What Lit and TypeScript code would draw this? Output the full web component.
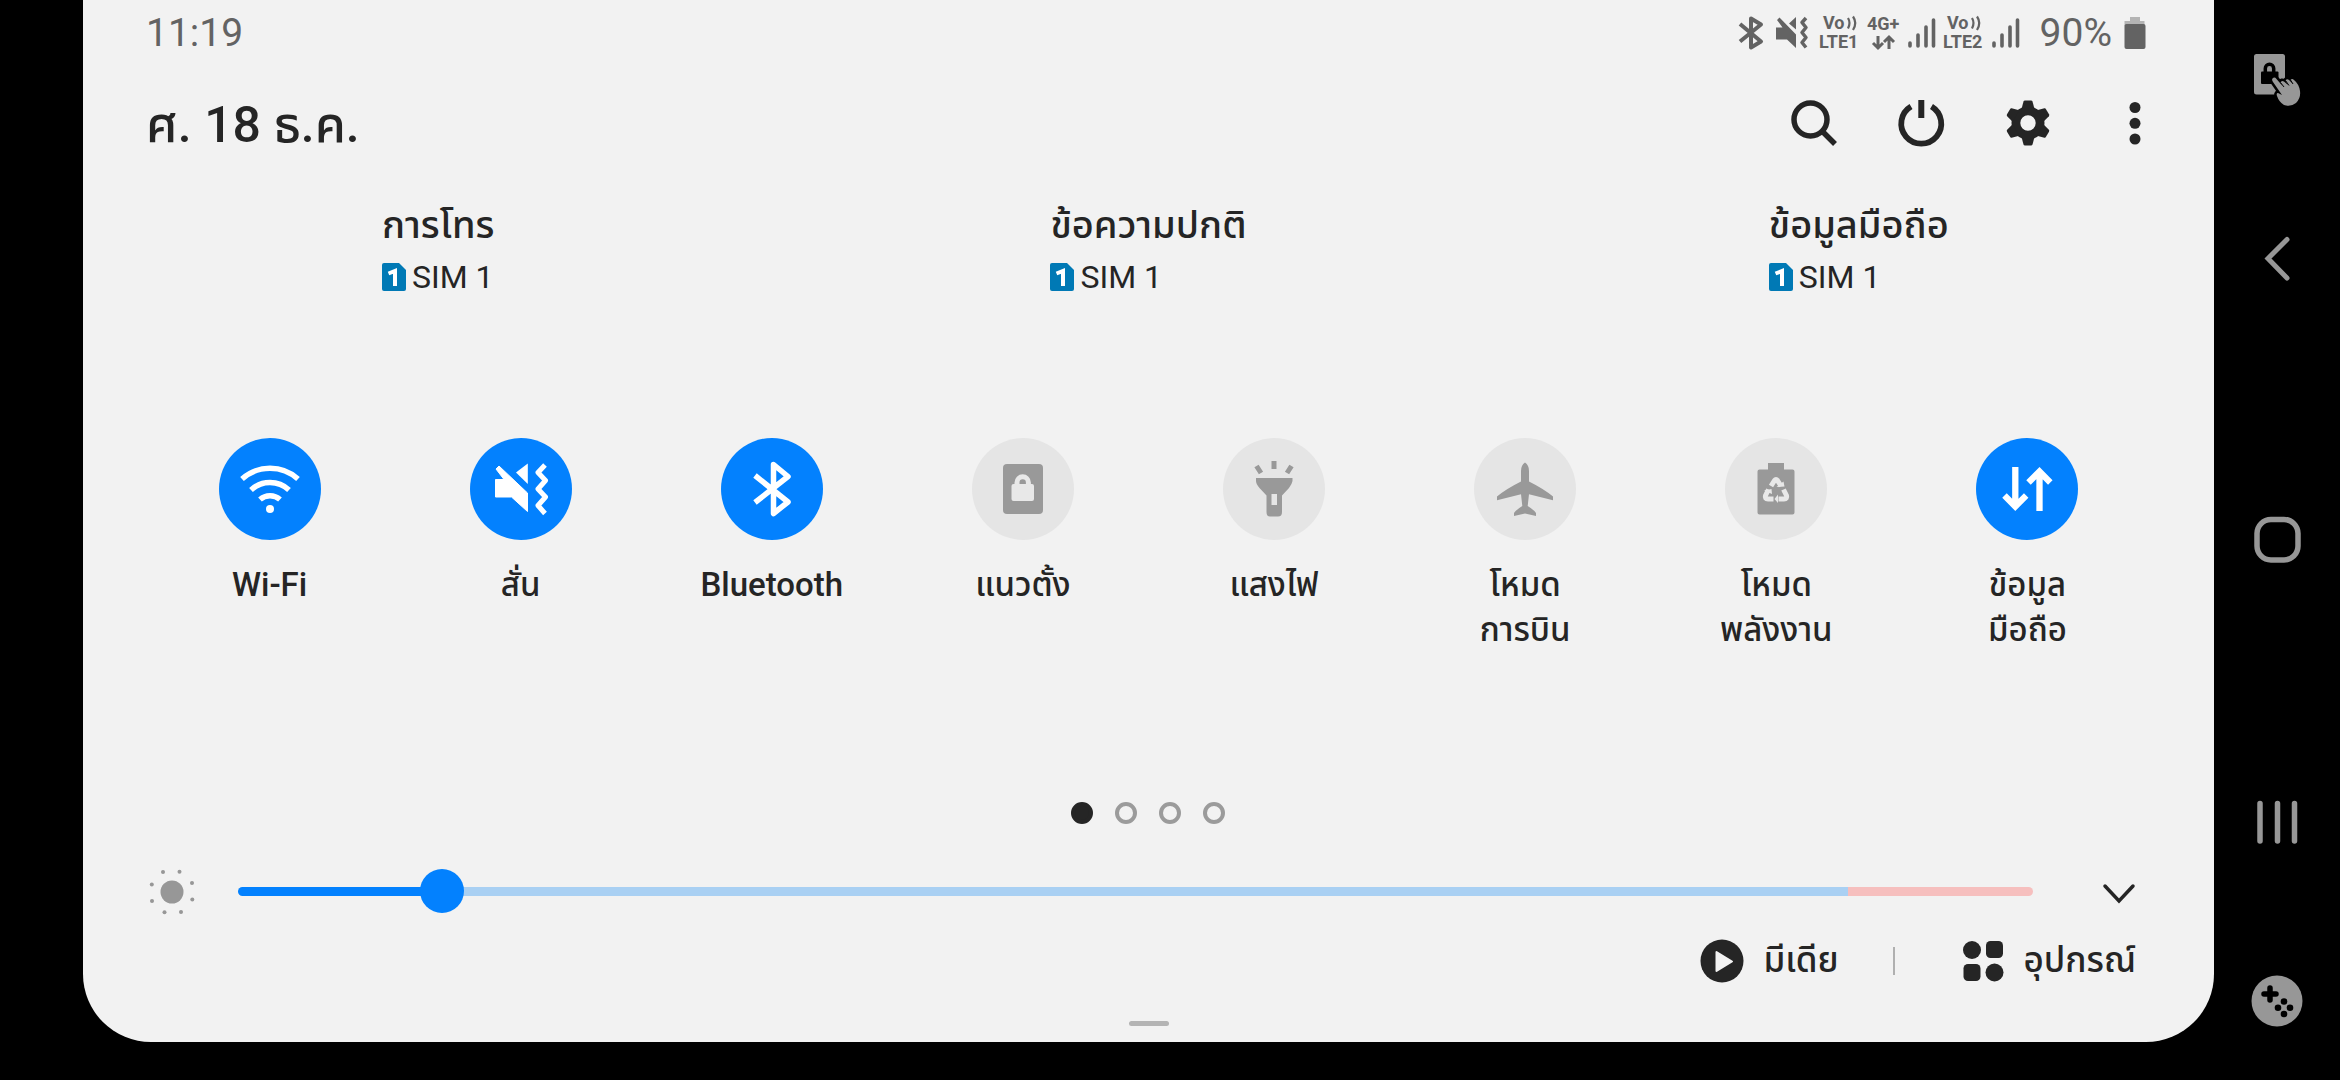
import { LitElement, html, svg, css, type TemplateResult } from "lit";
import { customElement, property, state } from "lit/decorators.js";
import { classMap } from "lit/directives/class-map.js";

const glyphs: Record<string, TemplateResult> = {
  wifi: svg`
    <g fill="none" stroke="currentColor" stroke-width="5.5">
      <path d="M23 41A42 42 0 0 1 79 41"/>
      <path d="M32 52A28 28 0 0 1 70 52"/>
      <path d="M41 61.5A15 15 0 0 1 61 61.5"/>
    </g>
    <circle cx="51" cy="71" r="4" fill="currentColor"/>`,
  vibrate: svg`
    <path fill="currentColor" stroke="currentColor" stroke-linejoin="round" d="M25.5 41.5H34L26 31L29 28L57.5 55V73.5L41.5 59H25.5Z"/>
    <path fill="currentColor" d="M46 34.500L57.800 25.600V46Z"/>
    <path fill="none" stroke="currentColor" stroke-width="5" stroke-linejoin="round" d="M75 27L68 34.500L75.500 42.500L68 51L75.500 59L68 67.500L75 75.500"/>`,
  bluetooth: svg`
    <path fill="none" stroke="currentColor" stroke-width="5.500" stroke-linejoin="round" d="M34 37.500L67 64L52.500 75.500V26.500L67 38.500L34 64.500"/>`,
  portrait: svg`
    <rect x="31" y="26" width="40" height="50" rx="4" fill="currentColor"/>
    <rect x="39.500" y="46" width="22.500" height="17" rx="2" fill="#e8e8e8"/>
    <path fill="none" stroke="#e8e8e8" stroke-width="5" d="M45 47V44.500A5.700 5.700 0 0 1 56.400 44.500V47"/>`,
  torch: svg`
    <g stroke="currentColor" stroke-width="5">
      <path d="M51 23V31M33.500 28L38 35M68.500 28L64 35"/>
    </g>
    <path fill="currentColor" fill-rule="evenodd" d="M33 40H69.500V43Q69 46 66 50L59 57.500V74Q59 78.500 55 78.500H47Q43.500 78.500 43.500 74V57.500L36.500 50Q33 46 33 43ZM48.500 56V67H54V56Z"/>`,
  plane: svg`
    <path fill="currentColor" d="M51 24.500Q55 27 55 33V43.500Q70 51 79 58.500V62.300L55 56.300L53.700 68Q60 72 62 75V78L51 75.500L40 78V75Q42 72 48.300 68L47 56.300L23 62.300V58.500Q32 51 47 43.500V33Q47 27 51 24.500Z"/>`,
  saver: svg`
    <path fill="currentColor" d="M43 25H59V31.500H67.500Q69.500 31.500 69.500 33.500V74.500Q69.500 76.500 67.500 76.500H34.500Q32.500 76.500 32.500 74.500V33.500Q32.500 31.500 34.500 31.500H43Z"/>
    <g fill="none" stroke="#e8e8e8" stroke-width="5" stroke-linejoin="round">
      <path d="M46 48L49.500 42.500Q51 40.500 52.500 42.500L56 48"/>
      <path d="M43.500 51.500L40.500 57.500Q39.500 61 43 61H48.500"/>
      <path d="M58.500 51.500L61.500 57.500Q62.500 61 59 61H53.500"/>
    </g>
    <path fill="#e8e8e8" d="M51.500 49L59.500 48.500L58.500 43.500ZM39 52.500L46.500 51L47 56ZM53 56.500L49.500 61L53 65Z"/>`,
  data: svg`
    <g fill="none" stroke="currentColor" stroke-width="6.300">
      <path d="M39.300 29V68M28.500 57.500L39.300 68.500L50.200 57.500"/>
      <path d="M63.500 73V33M52.500 44.500L63.500 33.500L74.300 44.500"/>
    </g>`,
};

interface Tile {
  icon: string;
  lines: string[];
  on: boolean;
}

@customElement("quick-tile")
class QuickTile extends LitElement {
  @property({ attribute: false }) tile!: Tile;

  static styles = css`
    :host { display: block; }
    .tile {
      width: 100%;
      display: flex;
      flex-direction: column;
      align-items: center;
      gap: 22px;
      padding: 0;
      border: 0;
      background: none;
      color: #252525;
      font: 500 33px/45px Roboto, "Noto Sans Thai", sans-serif;
      cursor: pointer;
    }
    .disc {
      width: 102px;
      height: 102px;
      border-radius: 50%;
      background: #e5e5e5;
      color: #999;
    }
    .disc.on { background: #0381fe; color: #fff; }
    .icon { display: block; width: 100%; height: 100%; }
    .line { display: block; }
  `;

  render() {
    const { icon, lines, on } = this.tile;
    return html`
      <button class="tile" aria-pressed=${on ? "true" : "false"}>
        <span class=${classMap({ disc: true, on })}>
          <svg class="icon" viewBox="0 0 102 102" aria-hidden="true">${glyphs[icon]}</svg>
        </span>
        <span>${lines.map((l) => html`<span class="line">${l}</span>`)}</span>
      </button>`;
  }
}

@customElement("status-bar")
class StatusBar extends LitElement {
  static styles = css`
    :host {
      display: flex;
      justify-content: space-between;
      align-items: center;
      height: 44px;
      color: #636363;
      font: 400 39px/44px Roboto, sans-serif;
    }
    .icons { display: flex; align-items: center; }
    .icon { display: block; height: 36px; overflow: visible; }
    .gap-s { margin-left: 8px; }
    .gap-m { margin-left: 12px; }
    .gap-l { margin-left: 20px; }
    .small { font: 700 18px Roboto, sans-serif; }
  `;

  private volte(n: number) {
    return svg`
      <g fill="currentColor">
        <text class="small" x="3" y="14">Vo</text>
        <text class="small" x="-1" y="33">LTE${n}</text>
      </g>
      <path fill="none" stroke="currentColor" stroke-width="2.200" d="M28 3Q31 8 28 13.500M33 1.500Q37.500 8 33 15"/>`;
  }

  private signal() {
    return svg`<path fill="none" stroke="currentColor" stroke-width="3.600" stroke-linecap="round" d="M2 28V31M10 20V31M18 12V31M25.500 5V31"/>`;
  }

  render() {
    return html`
      <span>11:19</span>
      <span class="icons">
        <svg class="icon" width="26" viewBox="0 0 26 36" role="img" aria-label="Bluetooth">
          <path fill="none" stroke="currentColor" stroke-width="4" stroke-linejoin="round" d="M2 9L23 26.500L13 32.500V3.500L23 9.500L2 26.500"/>
        </svg>
        <svg class="icon gap-m" width="32" viewBox="0 0 32 36" role="img" aria-label="สั่น">
          <path fill="currentColor" d="M0 12.500H6.500L1 5L3.500 2.500L20 19.500V33L11 24.500H0ZM13 8.500L20 2V14.500Z"/>
          <path fill="none" stroke="currentColor" stroke-width="3.500" stroke-linejoin="round" d="M30 3L26 7.500L30 12.500L26 17.500L30 22.500L26 27.500L30 32.500"/>
        </svg>
        <svg class="icon gap-m" width="40" viewBox="0 0 40 36">${this.volte(1)}</svg>
        <svg class="icon gap-s" width="32" viewBox="0 0 32 36">
          <text class="small" x="-1" y="15" fill="currentColor">4G+</text>
          <path fill="none" stroke="currentColor" stroke-width="3" d="M10 21V32M5 28L10 33L15 28M21 34V23M16 27L21 22L26 27"/>
        </svg>
        <svg class="icon gap-s" width="28" viewBox="0 0 28 36">${this.signal()}</svg>
        <svg class="icon gap-s" width="40" viewBox="0 0 40 36">${this.volte(2)}</svg>
        <svg class="icon gap-s" width="28" viewBox="0 0 28 36">${this.signal()}</svg>
        <span class="gap-l">90%</span>
        <svg class="icon gap-m" width="22" viewBox="0 0 22 36" role="img" aria-label="90%">
          <path fill="#b4b4b4" d="M6 2H16V6H20.500V11H.500V6H6Z"/>
          <rect x=".5" y="9" width="21" height="25" rx="2" fill="currentColor"/>
        </svg>
      </span>`;
  }
}

@customElement("nav-rail")
class NavRail extends LitElement {
  static styles = css`
    :host {
      display: flex;
      flex-direction: column;
      justify-content: space-between;
      align-items: center;
      box-sizing: border-box;
      width: 126px;
      padding: 54px 0;
      color: #979797;
    }
    .keys { display: flex; flex-direction: column; gap: 230px; }
    .key {
      width: 52px;
      height: 52px;
      padding: 0;
      border: 0;
      background: none;
      color: inherit;
      cursor: pointer;
    }
    .icon { display: block; width: 52px; height: 52px; }
  `;

  private key(label: string, drawing: TemplateResult) {
    return html`
      <button class="key" aria-label=${label}>
        <svg class="icon" viewBox="0 0 52 52" aria-hidden="true">${drawing}</svg>
      </button>`;
  }

  render() {
    return html`
      ${this.key("ล็อคหน้าจอ", svg`
        <rect x="3" y="0" width="31" height="40.500" rx="2.500" fill="currentColor"/>
        <rect x="10" y="17.500" width="17.500" height="12.500" rx="1" fill="#000"/>
        <path fill="none" stroke="#000" stroke-width="3.500" d="M14.300 18V14.500A4.200 4.200 0 0 1 22.700 14.500V18"/>
        <path fill="currentColor" stroke="#000" stroke-width="5" paint-order="stroke" stroke-linejoin="round"
          d="M21.500 24.500Q23.500 22.500 25.500 25L32 32.500L29.500 28.500Q30.500 26 33 27.500L37 31L34.500 26.500Q36 24.500 38 26L41.500 29.500L39.500 26Q41 24 43 26Q48 30 49 37Q50 44 45 49Q40 53 33 51Q28 48 26 42Q25 39 27 39L31 41L22 28Q20.500 26 21.500 24.500Z"/>
        <path stroke="#000" stroke-width="1" fill="none" d="M29.500 28.500L33 33M34.500 26.500L38 31.500M39.500 26L42 30"/>`)}
      <div class="keys">
        ${this.key("กลับ", svg`<path fill="none" stroke="currentColor" stroke-width="5" stroke-linecap="round" d="M36 6.500L17 25.500L36 45"/>`)}
        ${this.key("หน้าหลัก", svg`<rect x="6" y="4.500" width="41" height="40.500" rx="14" fill="none" stroke="currentColor" stroke-width="5.500"/>`)}
        ${this.key("ล่าสุด", svg`<path fill="none" stroke="currentColor" stroke-width="5.500" stroke-linecap="round" d="M9 6.500V44M26.500 6.500V44M43.500 6.500V44"/>`)}
      </div>
      ${this.key("เกม", svg`
        <circle cx="26" cy="26" r="25.500" fill="currentColor"/>
        <path stroke="#000" stroke-width="5.500" stroke-linecap="round" d="M13 19H25M19 13V25"/>
        <g fill="#000"><circle cx="33" cy="26.500" r="3.300"/><circle cx="27" cy="32.700" r="3.300"/><circle cx="39" cy="32.700" r="3.300"/><circle cx="33" cy="39" r="3.300"/></g>`)}
    `;
  }
}

@customElement("app-root")
class AppRoot extends LitElement {
  @state() private level = 104;

  private sims = ["การโทร", "ข้อความปกติ", "ข้อมูลมือถือ"];

  private tiles: Tile[] = [
    { icon: "wifi", lines: ["Wi-Fi"], on: true },
    { icon: "vibrate", lines: ["สั่น"], on: true },
    { icon: "bluetooth", lines: ["Bluetooth"], on: true },
    { icon: "portrait", lines: ["แนวตั้ง"], on: false },
    { icon: "torch", lines: ["แสงไฟ"], on: false },
    { icon: "plane", lines: ["โหมด", "การบิน"], on: false },
    { icon: "saver", lines: ["โหมด", "พลังงาน"], on: false },
    { icon: "data", lines: ["ข้อมูล", "มือถือ"], on: true },
  ];

  static styles = css`
    :host {
      display: flex;
      min-height: 100vh;
      background: #000;
      color: #252525;
      font-family: Roboto, "Noto Sans Thai", sans-serif;
    }
    button {
      padding: 0;
      border: 0;
      background: none;
      color: inherit;
      font: inherit;
      cursor: pointer;
    }
    .icon { display: block; }
    .panel {
      flex: 1;
      display: flex;
      flex-direction: column;
      box-sizing: border-box;
      margin: 0 0 39px 83px;
      padding-top: 11px;
      background: #f2f2f2;
      border-radius: 0 0 68px 68px;
    }
    .status { margin: 0 68px 0 63px; }
    .header {
      display: flex;
      justify-content: space-between;
      align-items: center;
      margin: 36px 49px 0 63px;
    }
    .date { margin: 0; padding-top: 4px; font-size: 50px; line-height: 60px; font-weight: 500; }
    .actions { display: flex; gap: 47px; }
    .sims {
      display: grid;
      grid-template-columns: repeat(3, 1fr);
      justify-items: center;
      margin-top: 42px;
    }
    .sim { display: block; text-align: left; }
    .sim-title { display: block; font-size: 38px; line-height: 56px; font-weight: 500; }
    .sim-card { display: flex; align-items: center; gap: 6px; font-size: 32px; line-height: 48px; }
    .tiles {
      display: grid;
      grid-template-columns: repeat(8, 1fr);
      margin: 137px 61px 0;
    }
    .pages { display: flex; justify-content: center; gap: 22px; margin: 150px 2px 0 0; }
    .page { box-sizing: border-box; width: 22px; height: 22px; border: 4px solid #9b9b9b; border-radius: 50%; }
    .page.current { background: #252525; border-color: #252525; }
    .brightness {
      display: flex;
      align-items: center;
      margin: 43px 65px 0 64px;
    }
    .range {
      flex: 1;
      appearance: none;
      height: 44px;
      margin: 0 56px 0 43px;
      background: none;
    }
    .range::-webkit-slider-runnable-track {
      height: 9px;
      border-radius: 5px;
      background:
        linear-gradient(#0381fe, #0381fe) 0 0 / 11% 100% no-repeat,
        linear-gradient(90deg, #a9d0f3 89.7%, #f6bfbe 89.7%);
    }
    .range::-webkit-slider-thumb {
      appearance: none;
      width: 44px;
      height: 44px;
      margin-top: -18px;
      border-radius: 50%;
      background: #0381fe;
    }
    .footer {
      display: flex;
      justify-content: flex-end;
      align-items: center;
      margin: 20px 78px 0;
      font-size: 35px;
      line-height: 52px;
    }
    .link { display: flex; align-items: center; gap: 19px; font-weight: 500; }
    .divider { width: 2px; height: 28px; margin: 0 67px 0 55px; background: #b0b0b0; }
    .handle { width: 40px; height: 5px; margin: 34px auto 16px; border-radius: 3px; background: #b4b4b4; }
  `;

  private action(label: string, drawing: TemplateResult) {
    return html`
      <button aria-label=${label}>
        <svg class="icon" width="60" height="60" viewBox="0 0 60 60" aria-hidden="true">${drawing}</svg>
      </button>`;
  }

  render() {
    return html`
      <main class="panel">
        <status-bar class="status"></status-bar>
        <header class="header">
          <h1 class="date">ศ. 18 ธ.ค.</h1>
          <div class="actions">
            ${this.action("ค้นหา", svg`
              <circle cx="26.500" cy="26.500" r="16.500" fill="none" stroke="currentColor" stroke-width="5.500"/>
              <path stroke="currentColor" stroke-width="5.500" d="M38 38L51 51"/>`)}
            ${this.action("ปิดเครื่อง", svg`
              <path fill="none" stroke="currentColor" stroke-width="5.800" d="M20 13.500A20 20 0 1 0 40.500 13.500"/>
              <path stroke="currentColor" stroke-width="6" d="M30.300 7V25"/>`)}
            ${this.action("การตั้งค่า", svg`
              <g fill="currentColor">
                <path fill-rule="evenodd" d="M30 13.500A16.500 16.500 0 1 0 30 46.500A16.500 16.500 0 1 0 30 13.500ZM30 22.300A7.700 7.700 0 1 1 30 37.700A7.700 7.700 0 1 1 30 22.300Z"/>
                ${[0, 60, 120, 180, 240, 300].map((a) => svg`<path transform="rotate(${a} 30 30)" d="M25.500 8.500Q25.800 7.500 27 7.500H33Q34.200 7.500 34.500 8.500L36.500 16H23.500Z"/>`)}
              </g>`)}
            ${this.action("เพิ่มเติม", svg`
              <g fill="currentColor"><circle cx="30" cy="14.500" r="5.500"/><circle cx="30" cy="30.300" r="5.500"/><circle cx="30" cy="46" r="5.500"/></g>`)}
          </div>
        </header>

        <section class="sims">
          ${this.sims.map((name) => html`
            <button class="sim">
              <span class="sim-title">${name}</span>
              <span class="sim-card">
                <svg class="icon" width="24" height="28" viewBox="0 0 24 28" aria-hidden="true">
                  <path fill="#0079b5" d="M2 0H17L24 7V26Q24 28 22 28H2Q0 28 0 26V2Q0 0 2 0Z"/>
                  <path fill="none" stroke="#fff" stroke-width="4" d="M6.500 10.500L13 8V23"/>
                </svg>
                SIM 1
              </span>
            </button>`)}
        </section>

        <section class="tiles">
          ${this.tiles.map((t) => html`<quick-tile .tile=${t}></quick-tile>`)}
        </section>

        <div class="pages">
          ${[0, 1, 2, 3].map((i) => html`<span class=${classMap({ page: true, current: i === 0 })}></span>`)}
        </div>

        <div class="brightness">
          <svg class="icon" width="48" height="48" viewBox="0 0 48 48" aria-hidden="true">
            <g fill="#979797">
              <circle cx="25" cy="25" r="11.500"/>
              ${[[16, 5], [32.5, 4.8], [45, 16], [45.3, 32.5], [34, 45], [17.5, 45.3], [5, 34], [4.8, 17.5]].map(([x, y]) => svg`<circle cx=${x} cy=${y} r="2"/>`)}
            </g>
          </svg>
          <input class="range" type="range" min="0" max="1000" aria-label="ความสว่าง"
            .value=${String(this.level)}
            @input=${(e: Event) => (this.level = Number((e.target as HTMLInputElement).value))}>
          <button aria-label="ขยาย">
            <svg class="icon" width="60" height="48" viewBox="0 0 60 48" aria-hidden="true">
              <path fill="none" stroke="currentColor" stroke-width="3.500" stroke-linecap="round" d="M16 19L30 34L44 19"/>
            </svg>
          </button>
        </div>

        <footer class="footer">
          <button class="link">
            <svg class="icon" width="44" height="50" viewBox="0 0 44 50" aria-hidden="true">
              <circle cx="22" cy="25" r="21.500" fill="currentColor"/>
              <path fill="#f2f2f2" stroke="#f2f2f2" stroke-width="2" stroke-linejoin="round" d="M16.500 16V35L32 25.500Z"/>
            </svg>
            มีเดีย
          </button>
          <span class="divider"></span>
          <button class="link">
            <svg class="icon" width="42" height="42" viewBox="0 0 42 42" aria-hidden="true">
              <g fill="currentColor">
                <circle cx="10" cy="10" r="9"/><rect x="24" y="1" width="17" height="17" rx="4.500"/>
                <rect x="1.500" y="24" width="17" height="17" rx="4.500"/><circle cx="32.500" cy="32.500" r="9"/>
              </g>
            </svg>
            อุปกรณ์
          </button>
        </footer>
        <div class="handle"></div>
      </main>
      <nav-rail></nav-rail>`;
  }
}
